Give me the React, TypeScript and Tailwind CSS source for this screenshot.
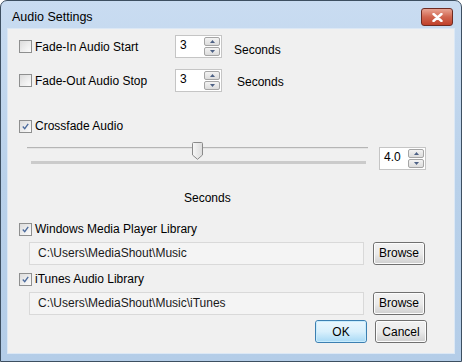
import React from "react";

const font = { fontFamily: '"Liberation Sans", Arial, sans-serif' };

function CheckBox({ checked }: { checked?: boolean }) {
  return (
    <div className="w-[13px] h-[13px] border border-[#8e8f8f] bg-gradient-to-br from-[#dcdcdc] to-[#fbfbfb] p-[2px] flex items-center justify-center shrink-0">
      <div className="w-full h-full bg-gradient-to-br from-[#e2e2e2] to-[#f7f7f7] flex items-center justify-center">
        {checked && (
          <svg width="9" height="9" viewBox="0 0 9 9">
            <path d="M1 4.5 L3.5 7.2 L8 1" fill="none" stroke="#4a6a9c" strokeWidth="1.7" />
          </svg>
        )}
      </div>
    </div>
  );
}

function SpinBox({ value }: { value: string }) {
  return (
    <div className="w-[47px] h-[23px] border border-[#c5c5c5] bg-white flex items-stretch shrink-0">
      <div className="flex-1 pl-[4px] text-[12px] leading-[14px] pt-[2px] text-black">{value}</div>
      <div className="w-[17px] flex flex-col gap-[1px] py-[1px] pr-[1px]">
        <div className="flex-1 border border-[#a5a5a5] rounded-[2px] bg-gradient-to-b from-[#f3f3f3] to-[#dcdcdc] flex items-center justify-center">
          <svg width="5" height="3" viewBox="0 0 5 3"><path d="M0 3 L2.5 0 L5 3 Z" fill="#4d6185" /></svg>
        </div>
        <div className="flex-1 border border-[#a5a5a5] rounded-[2px] bg-gradient-to-b from-[#f3f3f3] to-[#dcdcdc] flex items-center justify-center">
          <svg width="5" height="3" viewBox="0 0 5 3"><path d="M0 0 L2.5 3 L5 0 Z" fill="#4d6185" /></svg>
        </div>
      </div>
    </div>
  );
}

function Btn({ label, primary }: { label: string; primary?: boolean }) {
  return (
    <div
      className={
        "w-[52px] h-[23px] rounded-[3px] border flex items-center justify-center text-[12px] text-black " +
        (primary
          ? "border-[#3c7fb1] bg-gradient-to-b from-[#eaf6fd] via-[#d9f0fc] to-[#a7d9f5]"
          : "border-[#707070] bg-gradient-to-b from-[#f2f2f2] via-[#ebebeb] to-[#cfcfcf]")
      }
    >
      <div className={"w-full h-full rounded-[2px] border flex items-center justify-center " + (primary ? "border-[#c8ecfd]" : "border-[#fcfcfc]")}>
        {label}
      </div>
    </div>
  );
}

function Field({ value }: { value: string }) {
  return (
    <div className="w-[335px] h-[23px] border border-[#d9d9d9] bg-[#f4f4f4] flex items-center pl-[8px] text-[12px] text-[#1a1a1a]">
      {value}
    </div>
  );
}

export default function App() {
  return (
    <div className="w-[462px] h-[362px] bg-white text-[12px]" style={font}>
      <div className="w-[462px] h-[362px] rounded-t-[7px] border border-[#3d4f61] bg-gradient-to-b from-[#c9dcf1] via-[#b9d1ea] to-[#b4cde8] flex flex-col">
        {/* title bar */}
        <div className="h-[27px] flex items-center justify-between pl-[11px] pr-[8px] shrink-0">
          <span className="text-[12.5px] text-black mt-[5px]">Audio Settings</span>
          <div className="w-[32px] h-[18px] mt-[5px] rounded-[3px] border border-[#6e2b22] bg-gradient-to-b from-[#e8a493] via-[#d0654f] to-[#c0402a] flex items-center justify-center">
            <svg width="11" height="9" viewBox="0 0 11 9">
              <path d="M1.5 1 L9.5 8 M9.5 1 L1.5 8" stroke="#ffffff" strokeWidth="2.4" strokeLinecap="round" />
            </svg>
          </div>
        </div>
        {/* client */}
        <div className="mx-[6px] h-[326px] border border-[#dce8f5] bg-[#f0f0f0] flex flex-col">
          {/* row 1 */}
          <div className="flex items-center h-[23px] mt-[6px] pl-[11px]">
            <div className="w-[156px] flex items-center gap-[3px]">
              <CheckBox />
              <span className="text-black">Fade-In Audio Start</span>
            </div>
            <SpinBox value="3" />
            <span className="text-black ml-[12px] mt-[7px]">Seconds</span>
          </div>
          {/* row 2 */}
          <div className="flex items-center h-[23px] mt-[11px] pl-[11px]">
            <div className="w-[156px] flex items-center gap-[3px]">
              <CheckBox />
              <span className="text-black">Fade-Out Audio Stop</span>
            </div>
            <SpinBox value="3" />
            <span className="text-black ml-[15px] mt-[3px]">Seconds</span>
          </div>
          {/* crossfade */}
          <div className="flex items-center h-[14px] mt-[27px] pl-[11px] gap-[3px]">
            <CheckBox checked />
            <span className="text-black">Crossfade Audio</span>
          </div>
          {/* slider row */}
          <div className="flex items-start mt-[9px] pl-[19px] h-[28px]">
            <div className="relative w-[341px] h-[28px]">
              <div className="absolute left-0 right-0 top-[5px] h-[1px] bg-[#b5b5b5]" />
              <div className="absolute left-0 right-0 top-[6px] h-[1px] bg-[#e4e4e4]" />
              <svg className="absolute left-[165px] top-0" width="11" height="18" viewBox="0 0 11 18">
                <defs>
                  <linearGradient id="th" x1="0" y1="0" x2="1" y2="0">
                    <stop offset="0" stopColor="#f7f7f7" />
                    <stop offset="1" stopColor="#dcdcdc" />
                  </linearGradient>
                </defs>
                <path d="M0.5 1.5 Q0.5 0.5 1.5 0.5 L9.5 0.5 Q10.5 0.5 10.5 1.5 L10.5 13 L5.5 17.3 L0.5 13 Z" fill="url(#th)" stroke="#8a8a8a" />
              </svg>
              <div className="absolute left-[4px] right-[2px] top-[19px] h-[3px] bg-[#cbcbcb]" />
            </div>
            <div className="ml-[11px] mt-[5px]">
              <SpinBox value="4.0" />
            </div>
          </div>
          {/* seconds */}
          <div className="mt-[20px] pl-[176px] text-black leading-[16px]">Seconds</div>
          {/* WMP */}
          <div className="flex items-center h-[14px] mt-[16px] pl-[11px] gap-[3px]">
            <CheckBox checked />
            <span className="text-black">Windows Media Player Library</span>
          </div>
          <div className="flex items-center mt-[5px] pl-[21px] gap-[9px] h-[24px]">
            <Field value="C:\Users\MediaShout\Music" />
            <Btn label="Browse" />
          </div>
          {/* iTunes */}
          <div className="flex items-center h-[14px] mt-[7px] pl-[11px] gap-[3px]">
            <CheckBox checked />
            <span className="text-black">iTunes Audio Library</span>
          </div>
          <div className="flex items-center mt-[5px] pl-[21px] gap-[9px] h-[24px]">
            <Field value="C:\Users\MediaShout\Music\iTunes" />
            <Btn label="Browse" />
          </div>
          {/* buttons */}
          <div className="flex justify-end gap-[8px] mt-[5px] pr-[27px]">
            <Btn label="OK" primary />
            <Btn label="Cancel" />
          </div>
        </div>
      </div>
    </div>
  );
}
